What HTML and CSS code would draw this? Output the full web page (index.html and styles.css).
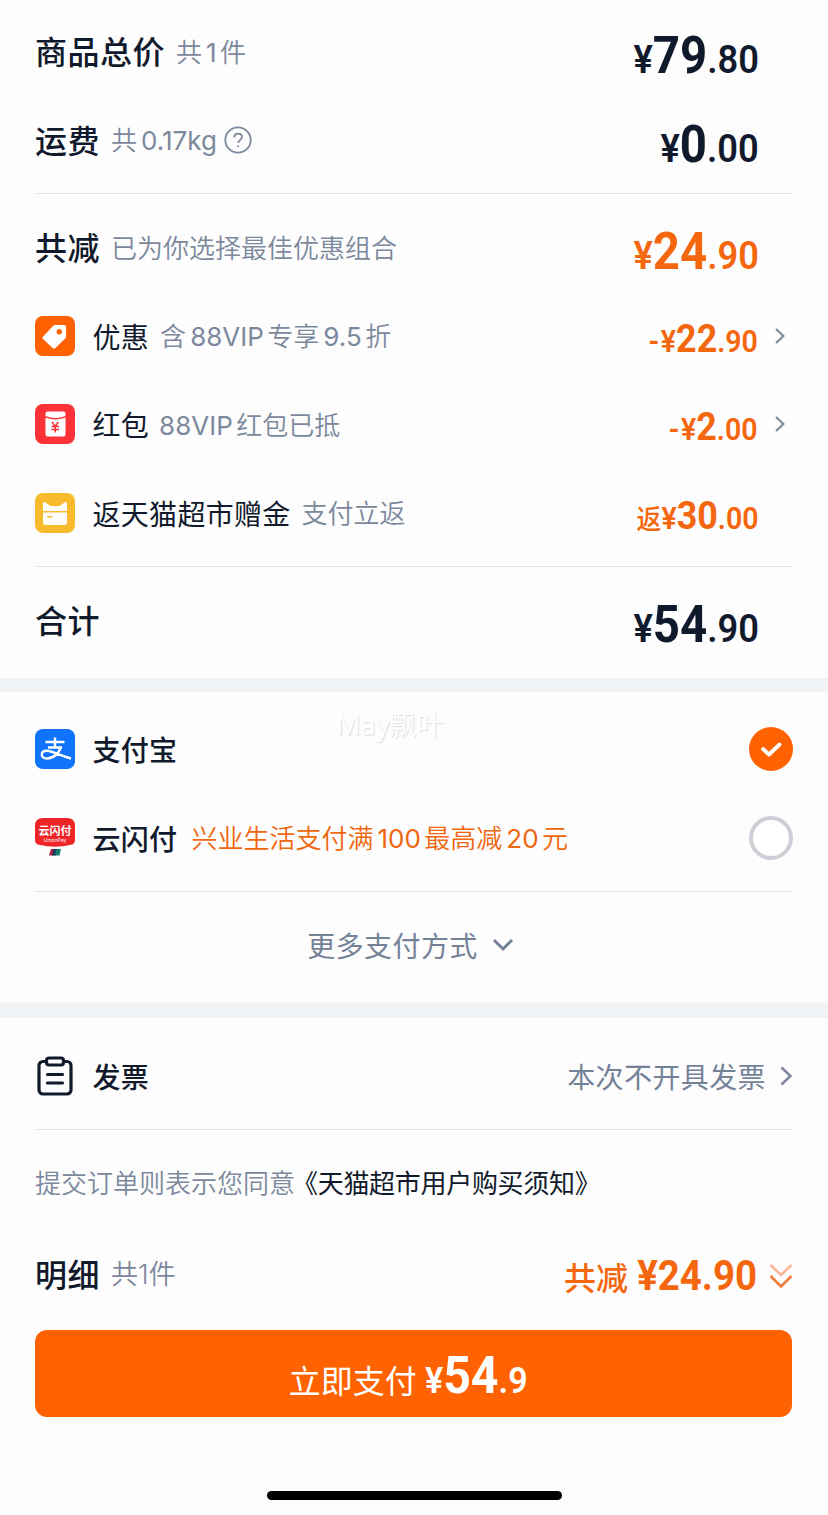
FILE: index.html
```html
<!DOCTYPE html>
<html lang="zh-CN">

<head>
  <meta charset="UTF-8">
  <meta name="viewport" content="width=device-width, initial-scale=1.0">
  <title>确认订单</title>
  <link rel="stylesheet" href="styles.css">
</head>

<body>
  <div class="section summary">
    <div class="row">
      <span class="title">商品总价</span>
      <span class="note">共<span class="num">1</span>件</span>
      <div class="price big"><span>¥</span><b>79</b><span>.80</span></div>
    </div>
    <div class="row">
      <span class="title">运费</span>
      <span class="note">共<span class="num">0.17kg</span></span>
      <svg class="help" viewBox="0 0 28 28">
        <circle cx="14" cy="14" r="12.7" />
        <path d="M10.2 11.4c0-2.3 1.6-3.8 3.9-3.8s3.9 1.5 3.9 3.5c0 2.8-3.8 3-3.8 6" />
        <path d="M14.2 19.4v1.6" />
      </svg>
      <div class="price big"><span>¥</span><b>0</b><span>.00</span></div>
    </div>
    <div class="line"></div>
    <div class="row">
      <span class="title">共减</span>
      <span class="note">已为你选择最佳优惠组合</span>
      <div class="price big orange"><span>¥</span><b>24</b><span>.90</span></div>
    </div>
    <div class="row">
      <svg class="icon" viewBox="0 0 40 40">
        <rect width="40" height="40" rx="8" fill="#ff6200" />
        <path d="M20 9h9a2 2 0 0 1 2 2v9.500a3 3 0 0 1-.8 2L20.400 32a2 2 0 0 1-2.800 0l-9.800-9.300a1.400 1.400 0 0 1 .1-2L18 10a3 3 0 0 1 2-1z" fill="#fff" />
        <circle cx="24.300" cy="15.800" r="2.700" fill="#ff6200" />
      </svg>
      <span class="name">优惠</span>
      <span class="note">含<span class="num">88VIP</span>专享<span class="num">9.5</span>折</span>
      <div class="price orange"><span class="minus">-</span><span>¥</span><b>22</b><span>.90</span></div>
      <svg class="arrow" viewBox="0 0 10 16"><path d="M1 1l7.500 7L1 15" /></svg>
    </div>
    <div class="row">
      <svg class="icon" viewBox="0 0 40 40">
        <rect width="40" height="40" rx="8" fill="#fb3338" />
        <path d="M10.500 9.500q0-2 2-2h16q2 0 2 2v2.500q-10 4-20 0z" fill="#fff" />
        <path d="M10.500 13.500q10 4 20 0v17q0 2-2 2h-16q-2 0-2-2z" fill="#fff" />
        <path d="M17 18l3.200 4.200L23.500 18M20.200 22v6.500M16.500 22.500h7.500M16.500 25.500h7.500" stroke="#fb3338" stroke-width="1.500" fill="none" />
      </svg>
      <span class="name">红包</span>
      <span class="note"><span class="num first">88VIP</span>红包已抵</span>
      <div class="price orange"><span class="minus">-</span><span>¥</span><b>2</b><span>.00</span></div>
      <svg class="arrow" viewBox="0 0 10 16"><path d="M1 1l7.500 7L1 15" /></svg>
    </div>
    <div class="row">
      <svg class="icon" viewBox="0 0 40 40">
        <rect width="40" height="40" rx="8" fill="#f9bb2d" />
        <path d="M8 11q0-3 2.500-1.500l5 3.500h9l5-3.500Q32 8 32 11v7H8z" fill="#fff" />
        <path d="M8 19.500h24V29q0 3-3 3H11q-3 0-3-3z" fill="#fff" />
        <path d="M12 23.800h5.500" stroke="#f9bb2d" stroke-width="1.500" />
      </svg>
      <span class="name">返天猫超市赠金</span>
      <span class="note">支付立返</span>
      <div class="price orange"><span class="back">返</span><span>¥</span><b>30</b><span>.00</span></div>
    </div>
    <div class="line"></div>
    <div class="row">
      <span class="title">合计</span>
      <div class="price big"><span>¥</span><b>54</b><span>.90</span></div>
    </div>
  </div>

  <div class="section payment">
    <div class="watermark">May飘叶</div>
    <div class="row">
      <svg class="icon" viewBox="0 0 40 40">
        <rect width="40" height="40" rx="8" fill="#0f73fc" />
        <g fill="none" stroke="#fff" stroke-width="2.400">
          <path d="M10.500 13h19M20 8.500v10M13 18.500h14" />
          <path d="M26 18C24 24 18.500 29.500 12 29.500c-3.500 0-5.200-1.800-5.200-3.800 0-2.300 2-3.900 5-3.900 5.700 0 12 4.700 24.200 7.700" />
        </g>
      </svg>
      <span class="name medium">支付宝</span>
      <svg class="radio" viewBox="0 0 44 44">
        <circle cx="22" cy="22" r="22" fill="#ff6200" />
        <path d="M14 22l6 5.500L30.500 17.500" fill="none" stroke="#fff" stroke-width="3.800" stroke-linecap="round" stroke-linejoin="round" />
      </svg>
    </div>
    <div class="row">
      <svg class="icon" viewBox="0 0 40 40">
        <path d="M8 0h24q8 0 8 8v14q0 4-4 4.800-16 4-32 0Q0 26 0 22V8q0-8 8-8z" fill="#ee2428" />
        <path d="M16 31h4l-1.500 6.500h-4.500z" fill="#b3213f" />
        <path d="M18.500 31h4l-1.500 6.500h-4z" fill="#173b63" />
        <path d="M21.500 31h4.500l-1.500 6.500H20z" fill="#17806f" />
        <text class="logo-cn" x="20" y="17">云闪付</text>
        <text class="logo-en" x="20" y="23.500">UnionPay</text>
      </svg>
      <span class="name medium">云闪付</span>
      <span class="note promo">兴业生活支付满<span class="num">100</span>最高减<span class="num">20</span>元</span>
      <svg class="radio" viewBox="0 0 44 44">
        <circle cx="22" cy="22" r="20" fill="#fff" stroke="#ccd0d6" stroke-width="4" />
      </svg>
    </div>
    <div class="line"></div>
    <div class="row more">
      <span>更多支付方式</span>
      <svg viewBox="0 0 22 14"><path d="M2 2l9 9 9-9" /></svg>
    </div>
  </div>

  <div class="section invoice">
    <div class="row">
      <svg class="icon" viewBox="0 0 40 40">
        <g fill="none" stroke="#111a2c" stroke-width="3.200" stroke-linecap="round" stroke-linejoin="round">
          <path d="M11 5.500H8a4 4 0 0 0-4 4V34a4 4 0 0 0 4 4h24a4 4 0 0 0 4-4V9.500a4 4 0 0 0-4-4H29" />
          <rect x="11.500" y="2" width="17" height="7" rx="2.500" />
          <path d="M12.500 18.500h15M12.500 27h15" />
        </g>
      </svg>
      <span class="name medium">发票</span>
      <span class="choice">本次不开具发票</span>
      <svg class="arrow bold" viewBox="0 0 12 20"><path d="M1.500 1.500L10.500 10l-9 8.500" /></svg>
    </div>
    <div class="line"></div>
    <div class="row agree">提交订单则表示您同意<a>《天猫超市用户购买须知》</a></div>
    <div class="row detail">
      <span class="title">明细</span>
      <span class="note tight">共1件</span>
      <div class="saved">共减<b>¥24.90</b></div>
      <svg class="down" viewBox="0 0 24 26">
        <path d="M1.500 2l10.500 10L22.500 2" stroke="#fcb494" />
        <path d="M1.500 13L12 23.500 22.500 13" stroke="#ee7a35" />
      </svg>
    </div>
    <button class="pay">立即支付<span class="price big"><span>¥</span><b>54</b><span>.9</span></span></button>
    <div class="home-bar"></div>
  </div>
</body>

</html>
```
FILE: styles.css
```css
* {
  box-sizing: border-box;
}

body {
  margin: 0;
  height: 1515px;
  background-color: #fdfdfd;
  color: #111a2c;
  font-family: Inter, "Noto Sans CJK SC", sans-serif;
  overflow: hidden;
}

.section {
  padding: 0 35px;
}

.summary {
  height: 678px;
  padding-top: 7px;
}

.payment {
  position: relative;
  height: 325px;
  padding-top: 13px;
  border-top: 14px solid #f0f3f5;
}

.invoice {
  padding-top: 13.500px;
  border-top: 15px solid #f0f3f5;
}

.row {
  display: flex;
  align-items: center;
  height: 88.500px;
  white-space: nowrap;
}

.line {
  height: 1px;
  margin: 9px 0;
  background-color: #e3e4e6;
}

.title {
  margin-right: 11px;
  padding-bottom: 2px;
  font-size: 32px;
  font-weight: 500;
  letter-spacing: 0.500px;
}

.name {
  margin-right: 11px;
  font-size: 28px;
  letter-spacing: 0.300px;
}

.medium {
  font-weight: 500;
}

.note {
  padding-bottom: 2px;
  color: #7c889c;
  font-size: 26px;
  font-weight: 350;
}

.num {
  margin: 0 3.500px 0 4px;
  font-weight: 400;
}

.num.first {
  margin-left: -1px;
}

.tight {
  font-size: 27px;
}

.promo {
  margin-left: 3px;
  color: #f0670f;
}

.icon {
  width: 40px;
  height: 40px;
  margin-right: 17.500px;
}

.help {
  width: 28px;
  height: 28px;
  margin-left: 4px;
  fill: none;
  stroke: #7c889c;
  stroke-width: 1.800;
}

.price {
  display: flex;
  align-items: baseline;
  margin-left: auto;
  margin-right: 34px;
  padding-top: 6px;
  font-family: Roboto, "Noto Sans CJK SC", sans-serif;
  font-size: 31px;
  font-weight: 600;
  transform: scaleX(0.92);
  transform-origin: right;
}

.price b {
  font-size: 39px;
  font-weight: 700;
}

.price.big {
  padding-top: 9px;
  font-size: 39px;
  transform: scaleX(0.93);
}

.price.big b {
  font-size: 51px;
}

.back {
  font-size: 27px;
  font-weight: 500;
}

.minus {
  margin-right: 2px;
}

.orange {
  color: #f5670e;
}

.arrow {
  width: 10px;
  height: 16px;
  margin: 0 8px 0 -17px;
  fill: none;
  stroke: #7c889c;
  stroke-width: 2;
}

.arrow.bold {
  width: 12px;
  height: 20px;
  margin: 0 1px 0 14px;
  stroke-width: 2.500;
}

.watermark {
  position: absolute;
  top: 12px;
  left: 336px;
  color: #fff;
  font-family: "Noto Sans", "Noto Sans CJK SC", sans-serif;
  font-size: 27px;
  text-shadow: 1px 1px 1px #dcdcdc;
}

.radio {
  width: 44px;
  height: 44px;
  margin-left: auto;
}

.logo-cn {
  fill: #fff;
  font-size: 11px;
  font-weight: 700;
  text-anchor: middle;
}

.logo-en {
  fill: #fff;
  font-size: 5px;
  text-anchor: middle;
}

.more {
  justify-content: center;
  padding-right: 7px;
  color: #748298;
  font-size: 28px;
  letter-spacing: 0.400px;
}

.more svg {
  width: 22px;
  height: 14px;
  margin-left: 14px;
  fill: none;
  stroke: #748298;
  stroke-width: 3;
}

.choice {
  margin-left: auto;
  color: #748298;
  font-size: 28px;
  letter-spacing: 0.400px;
}

.agree {
  padding-bottom: 3px;
  color: #7c889c;
  font-size: 26px;
  font-weight: 350;
}

.agree a {
  margin-left: -3px;
  color: #111a2c;
  font-weight: 400;
  letter-spacing: -0.300px;
}

.detail {
  margin-top: 2px;
}

.saved {
  display: flex;
  align-items: baseline;
  margin-left: auto;
  padding-bottom: 1px;
  color: #f5670e;
  font-size: 32px;
  font-weight: 500;
}

.saved b {
  margin-left: -2px;
  padding-top: 4px;
  font-family: Roboto, sans-serif;
  font-size: 42px;
  transform: scaleX(0.915);
  transform-origin: right;
}

.down {
  width: 24px;
  height: 26px;
  margin: 4px 0 0 12px;
  fill: none;
  stroke-width: 2.500;
}

.pay {
  display: flex;
  align-items: baseline;
  justify-content: center;
  width: 757px;
  height: 87px;
  margin-top: 12px;
  padding: 7px 5px 0 0;
  border: none;
  border-radius: 12px;
  background-color: #ff6200;
  color: #fff;
  font-family: inherit;
  font-size: 32px;
}

.pay .price {
  margin: 0 0 0 8px;
  transform-origin: left;
}

.pay .price.big {
  font-size: 36px;
  transform: scaleX(0.945);
}

.home-bar {
  width: 295px;
  height: 9px;
  margin: 74px auto 0;
  border-radius: 5px;
  background-color: #000;
}
```
